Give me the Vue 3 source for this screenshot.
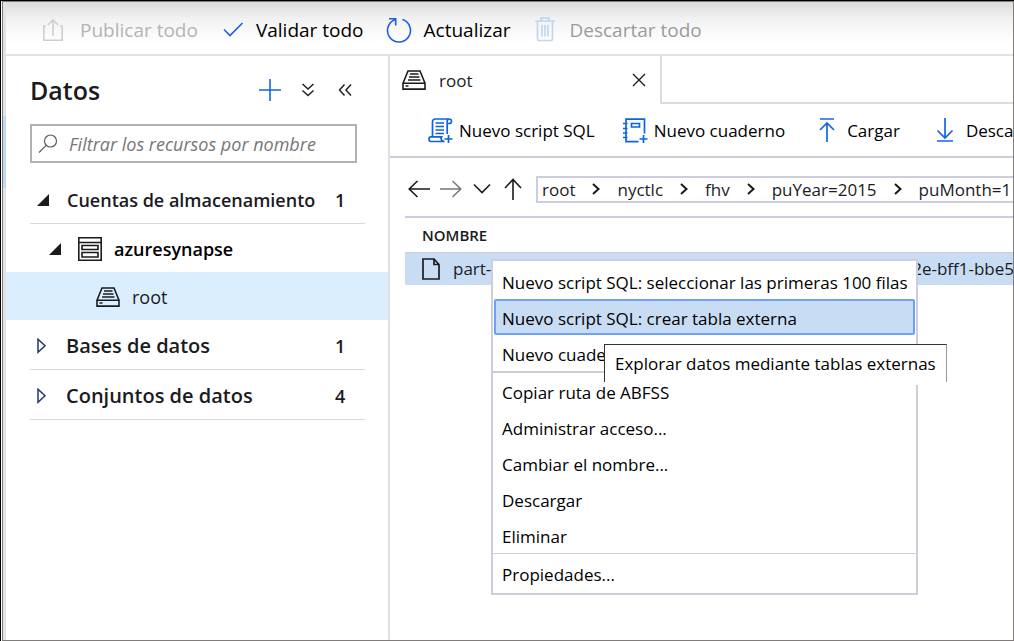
<script setup>
import { h, ref } from 'vue'

const filter = ref('')

const crumbs = ['root', 'nyctlc', 'fhv', 'puYear=2015', 'puMonth=1']

const menu = [
  ['Nuevo script SQL: seleccionar las primeras 100 filas', 'Nuevo script SQL: crear tabla externa', 'Nuevo cuaderno'],
  ['Copiar ruta de ABFSS', 'Administrar acceso...', 'Cambiar el nombre...', 'Descargar', 'Eliminar'],
  ['Propiedades...'],
]
const activeItem = 'Nuevo script SQL: crear tabla externa'

const DriveIcon = () =>
  h('svg', { width: 24, height: 20, viewBox: '0 0 24 20', fill: 'none', stroke: '#1b1b1f', 'stroke-width': 1.6, 'aria-hidden': 'true' }, [
    h('path', { d: 'M1 13.2L6 1h12l5 12.2M1 13.2h22v5.9H1z' }),
    h('path', { d: 'M8 4h8.500M7 7h10.500M6 10h12.500M3.500 16h3' }),
  ])
</script>

<template>
  <div class="frame">
    <div class="rail"><span class="rail-mark"></span></div>
    <div class="app">
      <header class="topbar">
        <button class="cmd publish" disabled>
          <svg width="22" height="24" viewBox="0 0 22 24" fill="none" stroke="#cfcfcf" stroke-width="1.6">
            <path d="M4 8H1.800V22.200H20.200V8H18M11 18V2M6 7l5-5 5 5" />
          </svg>
          <span>Publicar todo</span>
        </button>
        <button class="cmd check">
          <svg width="21" height="16" viewBox="0 0 21 16" fill="none" stroke="#1b5fe0" stroke-width="1.600">
            <path d="M1 7.500l6 6L19.500 1" />
          </svg>
          <span>Validar todo</span>
        </button>
        <button class="cmd refresh">
          <svg width="26" height="26" viewBox="0 0 26 26" fill="none" stroke="#1b5fe0" stroke-width="1.600">
            <path d="M9.500 2.600A11.500 11.500 0 1 0 16.500 2.600M3 1.800h6.700V8.500" />
          </svg>
          <span>Actualizar</span>
        </button>
        <button class="cmd trash" disabled>
          <svg width="20" height="25" viewBox="0 0 20 25" fill="none" stroke="#bfd6f0" stroke-width="1.700">
            <path d="M0 4h20M6 4V1.200h8V4M2.500 4V22q0 1.500 1.500 1.500h12q1.500 0 1.500-1.500V4M7 8v11.500M10 8v11.500M13 8v11.500" />
          </svg>
          <span>Descartar todo</span>
        </button>
      </header>

      <div class="body">
        <aside class="side">
          <div class="side-head">
            <h1>Datos</h1>
            <button class="ico" aria-label="Agregar">
              <svg width="24" height="24" viewBox="0 0 24 24" stroke="#1464e4" stroke-width="1.600"><path d="M1 12h22M12 1v22" /></svg>
            </button>
            <button class="ico expand" aria-label="Expandir">
              <svg width="14" height="14" viewBox="0 0 14 14" fill="none" stroke="#222" stroke-width="1.5"><path d="M1.500 1l5.500 5 5.500-5M1.500 7.500l5.500 5 5.500-5" /></svg>
            </button>
            <button class="ico collapse" aria-label="Contraer">
              <svg width="14" height="14" viewBox="0 0 14 14" fill="none" stroke="#222" stroke-width="1.5"><path d="M6.500 1.500L1.500 7l5 5.500M13 1.500L8 7l5 5.500" /></svg>
            </button>
          </div>

          <label class="search">
            <svg width="20" height="20" viewBox="0 0 20 20" fill="none" stroke="#555c68" stroke-width="1.200"><circle cx="12.500" cy="7" r="6" /><path d="M8.200 11.300L1 18.500" /></svg>
            <input v-model="filter" type="text" placeholder="Filtrar los recursos por nombre" aria-label="Filtrar los recursos por nombre" />
          </label>

          <nav class="tree">
            <button class="group">
              <svg width="12" height="12" viewBox="0 0 12 12"><path d="M12 0v12H0z" fill="#1b1b1b" /></svg>
              <span>Cuentas de almacenamiento</span><b>1</b>
            </button>
            <button class="node account">
              <svg width="12" height="12" viewBox="0 0 12 12"><path d="M12 0v12H0z" fill="#1b1b1b" /></svg>
              <svg width="24" height="24" viewBox="0 0 24 24" fill="none" stroke="#1b1b1f" stroke-width="1.600">
                <path d="M.8.800h22.400v22.400H.8zM.8 5.500h22.400M4 8.500h16v4H4zM4 15.500h16v4.500H4z" />
              </svg>
              <span>azuresynapse</span>
            </button>
            <button class="node selected"><DriveIcon /><span>root</span></button>
            <button class="group closed">
              <svg width="12" height="16" viewBox="0 0 12 16" fill="none" stroke="#253a6b" stroke-width="1.500"><path d="M1 1.200v13l7-6.500z" /></svg>
              <span>Bases de datos</span><b>1</b>
            </button>
            <button class="group closed">
              <svg width="12" height="16" viewBox="0 0 12 16" fill="none" stroke="#253a6b" stroke-width="1.500"><path d="M1 1.200v13l7-6.500z" /></svg>
              <span>Conjuntos de datos</span><b>4</b>
            </button>
          </nav>
        </aside>

        <main class="main">
          <div class="tabs">
            <div class="tab">
              <DriveIcon />
              <span>root</span>
              <button class="ico" aria-label="Cerrar">
                <svg width="14" height="14" viewBox="0 0 14 14" stroke="#1b1b2b" stroke-width="1.400"><path d="M1 1l12 12M13 1L1 13" /></svg>
              </button>
            </div>
            <div class="tab-rest"></div>
          </div>

          <div class="tools">
            <button class="tool script">
              <svg width="25" height="25" viewBox="0 0 25 25" fill="none" stroke="#0f62e0" stroke-width="1.700">
                <path d="M4.500 18.500V4q0-3 3-3H21q2.500 0 2.500 2.300T21 5.500H19.500M21 1q-1.800 0-1.800 2.500V16M14.500 23.500H3q-2 0-2-2.400t2-2.300h10.500q-1 1.500 0 3.200 1 1.500 3 1.500M7.500 5h8.500M7.500 8.500h8.500M7.500 12h8.500M7.500 15.500h8.500M20.500 17v8M16.500 21h8" />
              </svg>
              <span>Nuevo script SQL</span>
            </button>
            <button class="tool book">
              <svg width="25" height="25" viewBox="0 0 25 25" fill="none" stroke="#0f62e0" stroke-width="1.700">
                <path d="M15.500 23.700H3V1.200H21.500V15.500M0 5.500h4.500M0 10.500h4.500M0 15h4.500M0 19.500h4.500M8.500 5.500h8V9h-8zM20.500 17v8M16.500 21h8" />
              </svg>
              <span>Nuevo cuaderno</span>
            </button>
            <button class="tool upload">
              <svg width="16" height="24" viewBox="0 0 16 24" fill="none" stroke="#1565e6" stroke-width="1.700"><path d="M1 1h14M8 24V5M1 12l7-7 7 7" /></svg>
              <span>Cargar</span>
            </button>
            <button class="tool download">
              <svg width="18" height="24" viewBox="0 0 18 24" fill="none" stroke="#1565e6" stroke-width="1.700"><path d="M1 23h16M9 0v19.500M1.500 12.500L9 20l7.500-7.500" /></svg>
              <span>Desca</span>
            </button>
          </div>

          <div class="path">
            <button class="ico" aria-label="Atrás"><svg width="22" height="18" viewBox="0 0 22 18" fill="none" stroke="#1b1b1f" stroke-width="1.600"><path d="M22 9H1M9.500 1L1.200 9l8.300 8" /></svg></button>
            <button class="ico" aria-label="Adelante"><svg width="22" height="18" viewBox="0 0 22 18" fill="none" stroke="#77777b" stroke-width="1.500"><path d="M0 9h21M12.500 1l8.300 8-8.300 8" /></svg></button>
            <button class="ico" aria-label="Recientes"><svg width="20" height="12" viewBox="0 0 20 12" fill="none" stroke="#1b1b1f" stroke-width="1.600"><path d="M2 1.500l8 8 8-8" /></svg></button>
            <button class="ico" aria-label="Subir"><svg width="20" height="22" viewBox="0 0 20 22" fill="none" stroke="#1b1b1f" stroke-width="1.600"><path d="M11 22V1.500M3 10l8-8.500 8 8.500" /></svg></button>
            <div class="crumbs">
              <template v-for="(c, i) in crumbs" :key="c">
                <svg v-if="i" width="8" height="12" viewBox="0 0 8 12" fill="none" stroke="#1b1b1f" stroke-width="2"><path d="M1 1l5.500 5L1 11" /></svg>
                <a href="#">{{ c }}</a>
              </template>
            </div>
          </div>

          <table class="files">
            <thead><tr><th>NOMBRE</th></tr></thead>
            <tbody>
              <tr>
                <td>
                  <div class="file">
                    <svg width="18" height="22" viewBox="0 0 18 22" fill="none" stroke="#1b1b1f" stroke-width="1.700"><path d="M1 1h11l5 5.500V21H1zM12 1v5.500h5" /></svg>
                    <span class="start">part-</span><span>2e-bff1-bbe5</span>
                  </div>
                </td>
              </tr>
            </tbody>
          </table>
        </main>
      </div>
    </div>

    <div class="menu" role="menu">
      <div v-for="(group, g) in menu" :key="g" class="menu-group">
        <button v-for="item in group" :key="item" role="menuitem" :class="{ active: item === activeItem }">{{ item }}</button>
      </div>
    </div>
    <div class="tip" role="tooltip"><span>Explorar datos mediante tablas externas</span></div>
  </div>
</template>

<style>
body { margin: 0; background: #fff; }
</style>

<style scoped>
* { box-sizing: border-box; }
.frame {
  position: relative;
  display: flex;
  min-height: 100vh;
  overflow: hidden;
  border-top: 1px solid #000;
  border-left: 1px solid #000;
  font-family: "Open Sans", "Noto Sans", sans-serif;
  font-size: 17px;
  color: #1b1b1f;
}
.frame::after {
  content: "";
  position: absolute;
  inset: 0 0 0 1px;
  border: 1px solid #807c7c;
  pointer-events: none;
}
button {
  display: flex;
  align-items: center;
  padding: 0;
  border: 0;
  background: none;
  color: inherit;
  font: inherit;
  white-space: nowrap;
}
svg { flex: none; display: block; }
.rail { width: 5px; padding-top: 115px; border-left: 2px solid #fff; background: #e3e3e3; }
.rail-mark { display: block; height: 72px; background: #c5d9f1; }
.app { flex: 1; min-width: 0; display: flex; flex-direction: column; }
.topbar {
  display: flex;
  align-items: center;
  height: 55px;
  padding: 4px 0 0 36px;
  border-bottom: 2px solid #e2e2e2;
  background: linear-gradient(#dadada, #f2f2f2 18px, #fff 42px);
  font-size: 19px;
  color: #000;
}
.cmd { gap: 12px; margin-right: 25px; }
.cmd:disabled { color: #b4b4b4; }
.cmd.publish { gap: 16px; }
.cmd.check { margin-right: 22px; }
.cmd.trash { gap: 14px; color: #9b9b9b; }
.body { flex: 1; display: flex; }
.side { flex: none; width: 384px; border-right: 2px solid #e0e0e0; }
.side-head { display: flex; align-items: center; height: 68px; padding: 0 36px 0 24px; }
.expand { margin-left: 19px; }
.collapse { margin-left: 23px; }
h1 { flex: 1; margin: 0; font-size: 25px; font-weight: 600; }
.search {
  display: flex;
  align-items: center;
  gap: 11px;
  height: 39px;
  margin: 0 31px 0 24px;
  padding: 0 6px;
  border: 2px solid #b2b2b2;
}
.search input { flex: 1; min-width: 0; padding: 0; border: 0; outline: 0; background: none; font: italic 18px "Open Sans", sans-serif; }
.search input::placeholder { color: #777; opacity: 1; }
.tree { padding-top: 11px; }
.group {
  width: calc(100% - 47px);
  height: 50px;
  margin-left: 24px;
  padding: 2px 0 0 7px;
  gap: 18px;
  border-bottom: 1px solid #d9d9d9;
  font-size: 18px;
  font-weight: 600;
  text-align: left;
}
.group span { flex: 1; }
.group b { width: 30px; font-size: 18px; font-weight: 600; }
.group.closed { font-size: 20px; }
.group.closed svg { margin-right: -1px; }
.node { width: 100%; height: 48px; padding-top: 2px; font-size: 18px; }
.account { padding-left: 43px; gap: 17px; font-weight: 600; color: #000; }
.account span { margin-left: -5px; }
.selected { padding-left: 90px; gap: 12px; background: #dbeefe; }
.main { flex: 1; min-width: 0; overflow: hidden; }
.tabs { display: flex; height: 48px; }
.tab { display: flex; align-items: center; gap: 13px; width: 272px; padding: 0 14px 0 12px; border-right: 2px solid #dcdcdc; }
.tab span { flex: 1; }
.tab-rest { flex: 1; border-bottom: 2px solid #dcdcdc; }
.tools { display: flex; height: 54px; padding-left: 38px; border-bottom: 2px solid #cccedf; color: #000; }
.tool { flex: none; gap: 6px; }
.book { margin-left: 28px; }
.upload { margin-left: 34px; gap: 12px; }
.download { margin-left: 36px; gap: 12px; }
.path { display: flex; align-items: center; gap: 10px; height: 60px; margin-left: 15px; padding: 4px 0 0 3px; border-bottom: 2px solid #cccedf; }
.crumbs {
  display: flex;
  flex: 1;
  align-items: center;
  gap: 17px;
  height: 27px;
  min-width: 0;
  margin-left: 4px;
  padding-left: 4px;
  overflow: hidden;
  border: 2px solid #cccedf;
  border-right: 0;
}
.crumbs a { color: inherit; text-decoration: none; }
.files { width: calc(100% - 15px); margin-left: 15px; border-collapse: collapse; table-layout: fixed; }
.files th { height: 34px; padding: 0 0 0 17px; text-align: left; font-size: 15px; font-weight: 600; }
.files td { height: 33px; padding: 0 0 0 17px; overflow: hidden; border-top: 1px solid #cccedf; background: #c8dcf4; }
.file { display: flex; align-items: center; gap: 13px; white-space: nowrap; }
.start { width: 451px; }
.menu { position: absolute; left: 490px; top: 258px; width: 427px; border: 2px solid #cccedf; background: #fff; color: #000; }
.menu-group { padding: 0 1px; }
.menu-group:first-child { padding-top: 2px; }
.menu-group:nth-child(2) { border-top: 2px solid #cccedf; border-bottom: 1px solid #cccedf; }
.menu-group:last-child { padding: 1px 1px 2px; }
.menu button { width: 100%; height: 36px; padding: 2px 6px 0; border: 2px solid transparent; border-radius: 2px; }
.menu button.active { border-color: #6ea0f8; background: #c8dcf4; }
.tip { position: absolute; left: 603px; top: 343px; padding-bottom: 3px; background: #fff; color: #000; white-space: nowrap; }
.tip span { display: block; padding: 0 10px; border: solid #333; border-width: 1px 1px 0; border-right-color: #999; line-height: 37px; }
</style>
